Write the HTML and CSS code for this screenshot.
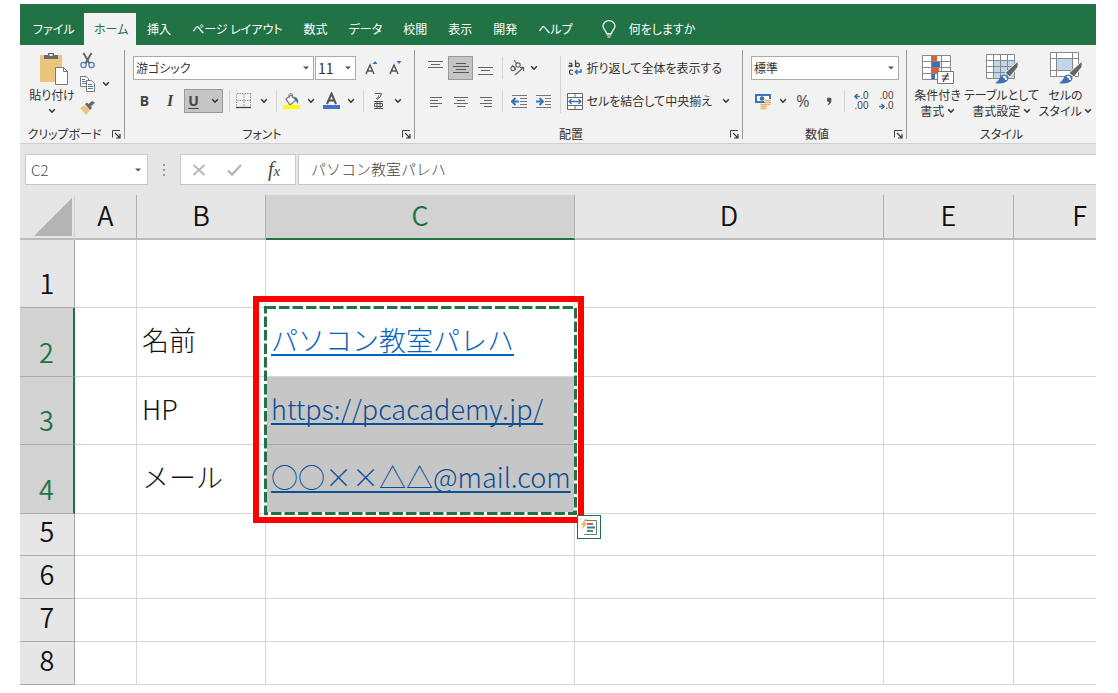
FILE: index.html
```html
<!DOCTYPE html>
<html lang="ja">
<head>
<meta charset="utf-8">
<meta name="viewport" content="width=device-width, initial-scale=1">
<title>ブック - 表計算</title>
<link rel="stylesheet" href="styles.css">
</head>
<body>
<svg class="defs" width="0" height="0" aria-hidden="true">
  <symbol id="chev" viewBox="0 0 8 6"><path d="M1.2 1.2 4 4.2 6.8 1.2" fill="none" stroke="#333" stroke-width="1.5"/></symbol>
  <symbol id="launch" viewBox="0 0 9 9"><path d="M.5 7.5V.5H8" fill="none" stroke="#444"/><path d="M3 3l4.500 4.500M8 4v4H4" fill="none" stroke="#333" stroke-width="1.2"/></symbol>
  <symbol id="tri" viewBox="0 0 6 4"><path d="M0 .5h6L3 3.500z" fill="#555"/></symbol>
</svg>
<div class="app">
  <nav class="tabs" aria-label="リボン タブ">
    <button class="tab">ファイル</button>
    <button class="tab tab-active">ホーム</button>
    <button class="tab">挿入</button>
    <button class="tab">ページ レイアウト</button>
    <button class="tab">数式</button>
    <button class="tab">データ</button>
    <button class="tab">校閲</button>
    <button class="tab">表示</button>
    <button class="tab">開発</button>
    <button class="tab">ヘルプ</button>
    <button class="tab tell-me">
      <svg width="14" height="18" viewBox="0 0 14 18" fill="none" stroke="#fff" stroke-width="1.200"><path d="M4.500 13.500c0-3-3.500-4-3.500-7.500a6 5.400 0 0 1 12 0c0 3.500-3.500 4.500-3.500 7.500zM4.500 15h5M5.500 17h3"/></svg>
      何をしますか
    </button>
  </nav>

  <div class="ribbon">
    <section class="group group-clipboard">
      <div class="body">
        <button class="paste">
          <svg width="30" height="34" viewBox="0 0 30 34"><rect x="1" y="3" width="22" height="27" fill="#ebc57e"/><path d="M5 7V3h4V1h6v2h4v4z" fill="#6a6a6a"/><rect x="10.500" y="2" width="3" height="2" fill="#f2f2f2"/><path d="M16.500 15.500h8l4 4v13h-12z" fill="#fff" stroke="#777"/><path d="M24.500 15.500v4h4" fill="none" stroke="#777"/></svg>
          <span>貼り付け</span>
          <svg width="8" height="6"><use href="#chev"/></svg>
        </button>
        <div class="clip-tools">
          <button class="tool" aria-label="切り取り"><svg width="15" height="17" viewBox="0 0 15 17" fill="none"><path d="M3.500 1 9.500 11.500M11.500 1 5.500 11.500" stroke="#666" stroke-width="2"/><circle cx="3.500" cy="13" r="2.600" stroke="#4a7ebb" stroke-width="1.300"/><circle cx="11.500" cy="13" r="2.600" stroke="#4a7ebb" stroke-width="1.300"/></svg></button>
          <button class="tool split" aria-label="コピー"><svg width="15" height="16" viewBox="0 0 15 16"><path d="M.5.5h6l2 2v8h-8z" fill="#fff" stroke="#777"/><path d="M2 3.500h3M2 5.500h4M2 7.500h4" stroke="#4a7ebb"/><path d="M6.500 4.500h5l3 3v8h-8z" fill="#fff" stroke="#777"/><path d="M8 8.500h4M8 10.500h5M8 12.500h5" stroke="#4a7ebb"/></svg><svg width="8" height="6"><use href="#chev"/></svg></button>
          <button class="tool" aria-label="書式のコピー"><svg width="15" height="14" viewBox="0 0 15 14"><path d="M0 7l5-3 5 5-4 5z" fill="#ebc57e"/><path d="M5 3l2-1.500 1.500 1.500L12 0l3 1.500-4 4L12 7l-2 2z" fill="#666"/></svg></button>
        </div>
      </div>
      <footer><span>クリップボード</span><button class="launch" aria-label="クリップボードの詳細"><svg width="9" height="9"><use href="#launch"/></svg></button></footer>
    </section>

    <section class="group group-font">
      <div class="body rows">
        <div class="row">
          <div class="combo combo-font"><select aria-label="フォント"><option>游ゴシック</option></select><svg width="6" height="4"><use href="#tri"/></svg></div>
          <div class="combo combo-size"><select aria-label="フォント サイズ"><option>11</option></select><svg width="6" height="4"><use href="#tri"/></svg></div>
          <button class="tool size-step" aria-label="フォント サイズの拡大"><svg width="14" height="15" viewBox="0 0 14 15"><path d="M1 13 5 4l4 9M2.500 10h5" fill="none" stroke="#555" stroke-width="1.500"/><path d="M7.500 3h5L10 0z" fill="#3b72b8"/></svg></button>
          <button class="tool size-step" aria-label="フォント サイズの縮小"><svg width="14" height="15" viewBox="0 0 14 15"><path d="M1 13 5 4l4 9M2.500 10h5" fill="none" stroke="#555" stroke-width="1.500"/><path d="M7.500 0h5L10 3z" fill="#3b72b8"/></svg></button>
        </div>
        <div class="row">
          <button class="tool letter bold">B</button>
          <button class="tool letter italic">I</button>
          <button class="tool letter underline"><span>U</span><svg width="8" height="6"><use href="#chev"/></svg></button>
          <i class="sep"></i>
          <button class="tool split" aria-label="罫線"><svg width="17" height="16" viewBox="0 0 17 16"><path d="M1 .5h14M1 7.500h14M.5 1v13M8 1v13M14.500 1v13" fill="none" stroke="#999" stroke-dasharray="1.500 1"/><path d="M0 14.500h15" stroke="#444" stroke-width="1.300"/></svg><svg width="8" height="6"><use href="#chev"/></svg></button>
          <i class="sep"></i>
          <button class="tool split" aria-label="塗りつぶしの色"><svg width="17" height="18" viewBox="0 0 17 18"><path d="M3 7l5-4 5 5-6 5z" fill="#fff" stroke="#777" stroke-width="1.200"/><path d="M6 6V2.500a2 2 0 0 1 3.500 0V6" fill="none" stroke="#777"/><path d="M11 5c3 0 5 2 4 7-1-2-2-3-3-4z" fill="#3b72b8"/><rect y="13" width="17" height="4" fill="#ffff00"/></svg><svg width="8" height="6"><use href="#chev"/></svg></button>
          <button class="tool split fontcolor" aria-label="フォントの色"><svg width="17" height="18" viewBox="0 0 17 18"><path d="M4 12 8.500 1.500 13 12M5.500 8.500h6" fill="none" stroke="#555" stroke-width="2"/><rect y="13" width="17" height="4" fill="#4472c4"/></svg><svg width="8" height="6"><use href="#chev"/></svg></button>
          <i class="sep"></i>
          <button class="tool split" aria-label="ふりがな"><svg width="17" height="18" viewBox="0 0 17 18" fill="none" stroke="#555"><path d="M5 1.500h6.500C11 4 9.500 6 7 7.500M8.500 3.500C8.500 5 8 6 6 7M4 9.500h9M4 16.500h9M7 9.500v7M10 9.500v7M4.500 11.500h8v3h-8z"/></svg><svg width="8" height="6"><use href="#chev"/></svg></button>
        </div>
      </div>
      <footer><span>フォント</span><button class="launch" aria-label="フォントの詳細"><svg width="9" height="9"><use href="#launch"/></svg></button></footer>
    </section>

    <section class="group group-align">
      <div class="body">
        <div class="rows">
          <div class="row">
            <button class="tool sq" aria-label="上揃え"><svg width="16" height="16" viewBox="0 0 16 16"><path d="M0 1.500h15M3 4.500h9M0 7.500h15" stroke="#666"/></svg></button>
            <button class="tool sq pressed" aria-label="上下中央揃え"><svg width="16" height="16" viewBox="0 0 16 16"><path d="M3 3.500h10M0 6.500h16M3 9.500h10M0 12.500h16" stroke="#555"/></svg></button>
            <button class="tool sq" aria-label="下揃え"><svg width="16" height="16" viewBox="0 0 16 16"><path d="M0 7.500h15M3 10.500h9M0 14.500h15" stroke="#666"/></svg></button>
            <i class="sep"></i>
            <button class="tool split" aria-label="方向"><svg width="17" height="17" viewBox="0 0 17 17"><g fill="none" stroke="#666" stroke-width="1.200"><circle cx="4" cy="8.500" r="2.200"/><path d="M3 5l4 5"/><circle cx="9" cy="5" r="2.200"/><path d="M5 0l3 4"/></g><path d="M6 15 14.500 7.500M11 7.500h3.500V11" fill="none" stroke="#666" stroke-width="1.300"/></svg><svg width="8" height="6"><use href="#chev"/></svg></button>
          </div>
          <div class="row">
            <button class="tool sq" aria-label="左揃え"><svg width="14" height="11" viewBox="0 0 14 11"><path d="M1 1.500h12M1 4.500h8M1 7.500h12M1 10.500h8" stroke="#666"/></svg></button>
            <button class="tool sq" aria-label="中央揃え"><svg width="14" height="11" viewBox="0 0 14 11"><path d="M0 1.500h14M3 4.500h8M0 7.500h14M3 10.500h8" stroke="#666"/></svg></button>
            <button class="tool sq" aria-label="右揃え"><svg width="14" height="11" viewBox="0 0 14 11"><path d="M1 1.500h12M5 4.500h8M1 7.500h12M5 10.500h8" stroke="#666"/></svg></button>
            <i class="sep"></i>
            <button class="tool sq" aria-label="インデントを減らす"><svg width="16" height="15" viewBox="0 0 16 15"><path d="M1 1.500h15M9 4.500h7M9 7.500h7M9 10.500h7M1 13.500h15" stroke="#777"/><path d="M8 7.500H1.500M4.500 4 1 7.500 4.500 11" fill="none" stroke="#3b72b8" stroke-width="2"/></svg></button>
            <button class="tool sq" aria-label="インデントを増やす"><svg width="16" height="15" viewBox="0 0 16 15"><path d="M0 1.500h15M9 4.500h6M9 7.500h6M9 10.500h6M0 13.500h15" stroke="#777"/><path d="M0 7.500h6.500M3.500 4 7 7.500 3.500 11" fill="none" stroke="#3b72b8" stroke-width="2"/></svg></button>
          </div>
        </div>
        <i class="sep sep-tall"></i>
        <div class="rows">
          <button class="tool wide"><svg width="16" height="16" viewBox="0 0 16 16"><g fill="none" stroke="#444" stroke-width="1.200"><path d="M2 3.500q3-1 3 1V7M5 5q-3 0-3 1.200T5 6"/><path d="M8.500 0v7"/><circle cx="10.500" cy="5" r="1.900"/><path d="M6 10.500q-3.500-1.500-3.500 1.500T6 14"/></g><path d="M14 9v3H8.500M10.500 9.800 8.300 12l2.200 2.200" fill="none" stroke="#3b72b8" stroke-width="1.500"/></svg>折り返して全体を表示する</button>
          <button class="tool wide"><svg width="16" height="17" viewBox="0 0 16 17"><path d="M.5.500h15v16H.500zM.5 4.500h15M.5 12.500h15M8 .5v4M8 12.500v4" fill="#fff" stroke="#666"/><path d="M2 8.500h12M4.500 6 2 8.500 4.500 11M11.500 6 14 8.500 11.500 11" fill="none" stroke="#3b72b8" stroke-width="1.300"/></svg>セルを結合して中央揃え<svg class="end" width="8" height="6"><use href="#chev"/></svg></button>
        </div>
      </div>
      <footer><span>配置</span><button class="launch" aria-label="配置の詳細"><svg width="9" height="9"><use href="#launch"/></svg></button></footer>
    </section>

    <section class="group group-number">
      <div class="body rows">
        <div class="combo"><select aria-label="数値の書式"><option>標準</option></select><svg width="6" height="4"><use href="#tri"/></svg></div>
        <div class="row">
          <button class="tool split money" aria-label="通貨表示形式"><svg width="17" height="17" viewBox="0 0 17 17"><path d="M0 1h16v9H0z" fill="#3b72b8"/><path d="M2 3h12v5H2z" fill="#fff"/><circle cx="7" cy="5.500" r="2.300" fill="#3b72b8"/><path d="M9 6h7v3H9zM5 10h7v6H5z" fill="#f2f2f2"/><path d="M9.500 7.500h6M9.500 9.500h6M9.500 11.500h6M5.500 11.500h6M5.500 13.500h6M5.500 15.500h6" stroke="#e6b566" stroke-width="1.300"/></svg><svg width="8" height="6"><use href="#chev"/></svg></button>
          <button class="tool sq percent">%</button>
          <button class="tool sq comma" aria-label="桁区切り"><svg width="6" height="9" viewBox="0 0 6 9"><path d="M3 .5a2.200 2.200 0 0 1 2.500 2.500C5.500 6 3.500 8 1 8.500 2.500 7 3 6 3 5A2.200 2.200 0 0 1 3 .5z" fill="#555"/></svg></button>
          <i class="sep"></i>
          <button class="tool sq decimal"><span><svg width="6" height="7" viewBox="0 0 6 7"><path d="M6 3.500H1.500M3.500 1 1 3.500 3.500 6" fill="none" stroke="#3b72b8" stroke-width="1.600"/></svg>.0</span><span>.00</span></button>
          <button class="tool sq decimal"><span>.00</span><span><svg width="6" height="7" viewBox="0 0 6 7"><path d="M0 3.500h4.500M2.500 1 5 3.500 2.500 6" fill="none" stroke="#3b72b8" stroke-width="1.600"/></svg>.0</span></button>
        </div>
      </div>
      <footer><span>数値</span><button class="launch" aria-label="数値の詳細"><svg width="9" height="9"><use href="#launch"/></svg></button></footer>
    </section>

    <section class="group group-styles">
      <div class="body">
        <button class="big">
          <svg width="32" height="32" viewBox="0 0 32 32"><path d="M.5 3.500h28v24H.5z" fill="#fff"/><path d="M9 4h6v5H9z" fill="#d9603c"/><path d="M9 10h9v5H9z" fill="#3b72b8"/><path d="M9 16h8v5H9z" fill="#d9603c"/><path d="M9 22h4v5H9z" fill="#3b72b8"/><path d="M.5 3.500h28v24H.5zM.5 9.500h28M.5 15.500h28M.5 21.500h28M9.500 3.500v24M19.500 3.500v24" fill="none" stroke="#888"/><path d="M15.500 19.500h16v12h-16z" fill="#fff" stroke="#777"/><path d="M20 24h7M20 27h7M26 21l-5 9" stroke="#333" stroke-width="1.200"/></svg>
          <span>条件付き</span><span>書式 <svg width="8" height="6"><use href="#chev"/></svg></span>
        </button>
        <button class="big">
          <svg width="32" height="32" viewBox="0 0 32 32"><path d="M.5 2.500h28v24H.5z" fill="#fff"/><path d="M7 8h21v18H7z" fill="#c2d6ea"/><path d="M.5 2.500h28v24H.5zM.5 8.500h28M.5 14.500h28M.5 20.500h28M7.500 2.500v24M14.500 2.500v24M21.500 2.500v24" fill="none" stroke="#888"/><path d="M32 9v6l-8 10-5-4z" fill="#666" stroke="#f2f2f2"/><path d="M9 31c4-2 4-5 7-8 4-2 8 2 6 5-3 4-9 4-13 3z" fill="#3b72b8"/><path d="M17 25q3-1 3 3" fill="none" stroke="#fff" stroke-width="2"/></svg>
          <span>テーブルとして</span><span>書式設定 <svg width="8" height="6"><use href="#chev"/></svg></span>
        </button>
        <button class="big">
          <svg width="32" height="32" viewBox="0 0 32 32"><path d="M.5.500h28v24H.500z" fill="#fff"/><path d="M7 7h15v11H7z" fill="#c2d6ea"/><path d="M.5.500h28v24H.500zM.5 6.500h28M.5 18.500h28M6.500.500v24M22.500.500v24" fill="none" stroke="#888"/><path d="M32 9v6l-8 10-5-4z" fill="#666" stroke="#f2f2f2"/><path d="M9 31c4-2 4-5 7-8 4-2 8 2 6 5-3 4-9 4-13 3z" fill="#3b72b8"/><path d="M17 25q3-1 3 3" fill="none" stroke="#fff" stroke-width="2"/></svg>
          <span>セルの</span><span>スタイル <svg width="8" height="6"><use href="#chev"/></svg></span>
        </button>
      </div>
      <footer><span>スタイル</span></footer>
    </section>
  </div>

  <div class="formula-bar">
    <div class="name-box"><input type="text" value="C2" aria-label="名前ボックス"><svg width="6" height="4"><use href="#tri"/></svg></div>
    <svg class="grip" width="4" height="14" viewBox="0 0 4 14"><path d="M1 1h2v2H1zM1 6h2v2H1zM1 11h2v2H1z" fill="#999"/></svg>
    <div class="fx-box">
      <button class="tool" aria-label="キャンセル"><svg width="14" height="12" viewBox="0 0 14 12"><path d="M1.500 1 12.500 11M12.500 1 1.500 11" stroke="#b5b5b5" stroke-width="1.800"/></svg></button>
      <button class="tool" aria-label="入力"><svg width="15" height="12" viewBox="0 0 15 12"><path d="M1 6.500 5 10.500 14 1" fill="none" stroke="#b5b5b5" stroke-width="2.400"/></svg></button>
      <button class="tool fx" aria-label="関数の挿入">f<small>x</small></button>
    </div>
    <input class="formula" type="text" value="パソコン教室パレハ" aria-label="数式バー">
  </div>

  <div class="grid">
    <table>
      <colgroup><col class="c-head"><col class="c-a"><col class="c-b"><col class="c-c"><col class="c-d"><col class="c-e"><col class="c-f"></colgroup>
      <thead>
        <tr class="r-head"><td class="corner"><svg width="38" height="38" viewBox="0 0 38 38"><path d="M38 0v38H0z" fill="#b4b4b4"/></svg></td><th scope="col">A</th><th scope="col">B</th><th scope="col" class="on">C</th><th scope="col">D</th><th scope="col">E</th><th scope="col">F</th></tr>
      </thead>
      <tbody>
        <tr class="r-68"><th scope="row">1</th><td></td><td></td><td></td><td></td><td></td><td></td></tr>
        <tr class="r-69"><th scope="row" class="on">2</th><td></td><td>名前</td><td><a href="#">パソコン教室パレハ</a></td><td></td><td></td><td></td></tr>
        <tr class="r-68"><th scope="row" class="on">3</th><td></td><td>HP</td><td class="picked"><a href="#">https://pcacademy.jp/</a></td><td></td><td></td><td></td></tr>
        <tr class="r-69"><th scope="row" class="on">4</th><td></td><td>メール</td><td class="picked"><a href="#">○○××△△@mail.com</a></td><td></td><td></td><td></td></tr>
        <tr class="r-42"><th scope="row">5</th><td></td><td></td><td></td><td></td><td></td><td></td></tr>
        <tr class="r-43"><th scope="row">6</th><td></td><td></td><td></td><td></td><td></td><td></td></tr>
        <tr class="r-43"><th scope="row">7</th><td></td><td></td><td></td><td></td><td></td><td></td></tr>
        <tr class="r-43"><th scope="row">8</th><td></td><td></td><td></td><td></td><td></td><td></td></tr>
      </tbody>
    </table>
    <svg class="ants" width="313" height="209" viewBox="0 0 313 209" fill="none" stroke-width="3"><path d="M1.500 1.500h310v206h-310z" stroke="#fff"/><path d="M1.500 1.500h310v206h-310z" stroke="#217346" stroke-dasharray="10.500 3"/><path d="M309 205h4v4h-4z" fill="#217346"/></svg>
    <div class="frame"></div>
    <button class="quick" aria-label="クイック分析"><svg width="18" height="18" viewBox="0 0 18 18"><path d="M4 2.500h12.500v14H4" fill="#fff" stroke="#777"/><path d="M7 5h6v2H7z" fill="#d9603c"/><path d="M7 8.500h8v2H7z" fill="#3b72b8"/><path d="M7 12h6v2H7z" fill="#3f8f83"/><path d="M5 1 1 7h2l-1 5 5-7H4.500L7 1z" fill="#f5b35c"/></svg></button>
  </div>
</div>
</body>
</html>
```
FILE: styles.css
```css
* { box-sizing: border-box; }

body {
  margin: 0;
  background: #fff;
  color: #333;
  font: 12px/16px "Noto Sans CJK JP", sans-serif;
}

.app {
  margin: 4px 22px 8px 20px;
  overflow: hidden;
}

.defs { position: absolute; }

button, select, input {
  margin: 0;
  padding: 0;
  border: 0;
  border-radius: 0;
  background: none;
  color: inherit;
  font: inherit;
}

svg { flex: none; display: block; }

/* tabs */
.tabs {
  display: flex;
  align-items: flex-end;
  gap: 1px;
  height: 41px;
  padding-left: 3px;
  background: #217346;
}

.tab {
  height: 32px;
  padding: 0 10px;
  color: #fff;
  font-feature-settings: "palt";
  white-space: nowrap;
}

.tab:first-child { width: 60px; }
.tab-active { width: 52px; background: #f2f2f2; color: #217346; }

.tell-me {
  display: flex;
  align-items: center;
  gap: 13px;
  padding-left: 18px;
}

/* ribbon */
.ribbon {
  display: flex;
  height: 99px;
  background: #f2f2f2;
  border-bottom: 1px solid #d0d0d0;
  font-feature-settings: "palt";
}

.group {
  display: flex;
  flex: none;
  flex-direction: column;
  justify-content: space-between;
  background: linear-gradient(#999, #999) right 5px / 1px 89px no-repeat;
}

.group-clipboard { width: 105px; }
.group-font { width: 290px; }
.group-align { width: 328px; }
.group-number { width: 164px; }
.group-styles { flex: 1 0 189px; background: none; }

.body { display: flex; padding: 11px 8px 0; }
.rows { display: flex; flex-direction: column; gap: 9px; }
.row { display: flex; align-items: center; height: 24px; }

.group footer { display: flex; align-items: center; height: 18px; }
.group footer span { flex: 1; text-align: center; }
.launch { width: 16px; padding-left: 3px; }

.tool {
  display: flex;
  flex: none;
  align-items: center;
  justify-content: center;
  height: 24px;
}

.split { gap: 7px; padding-right: 2px; }
.sq { width: 25px; }
.sep { flex: none; width: 1px; height: 22px; margin: 0 6px; background: #d4d4d4; }
.sep-tall { height: 57px; }

.pressed, .underline { background: #c5c5c5; border: 1px solid #999; }

.group-clipboard .body { padding: 3px 0 0 10px; gap: 6px; }
.paste { display: flex; flex-direction: column; align-items: center; gap: 1px; width: 44px; padding-top: 4px; }
.paste svg:first-child { margin-left: 4px; }
.paste svg:last-child { margin-top: 4px; }
.paste span { white-space: nowrap; }
.clip-tools { display: flex; flex-direction: column; align-items: flex-start; }

.combo { position: relative; flex: none; height: 24px; background: #fff; border: 1px solid #ababab; }
.combo select { appearance: none; width: 100%; height: 22px; padding-left: 2px; font-size: 12px; }
.combo > svg { position: absolute; right: 4px; top: 9px; pointer-events: none; }
.combo-font { width: 181px; margin-right: 1px; }
.combo-size { width: 41px; margin-right: 9px; }
.combo-size select { font-size: 14px; }
.size-step { width: 14px; margin-right: 10px; }

.letter { color: #444; font-family: "Noto Sans", sans-serif; font-size: 14px; font-weight: 700; }
.bold { width: 23px; }
.italic { width: 28px; font-family: "Liberation Serif", serif; font-size: 16px; font-style: italic; }
.underline { gap: 12px; width: 39px; }
.underline span { text-decoration: underline; text-underline-offset: 2px; }
.fontcolor { margin-left: 6px; }

.group-align .sep { margin: 0 3px 0 4px; }
.group-align .split { gap: 4px; margin-left: 3px; }
.wide { justify-content: flex-start; gap: 4px; white-space: nowrap; }
.wide .end { margin-left: 6px; }
.group-align .sep-tall { margin: 0 6px 0 auto; }
.group-align .body { padding-right: 13px; }

.percent { width: 26px; color: #555; font: 16px "Noto Sans", sans-serif; }
.money { margin: 0 1px 0 4px; }
.group-number .sep { margin: 0 4px 0 3px; }
.decimal { flex-direction: column; color: #444; font: 10px/10px "Liberation Sans", sans-serif; }
.decimal span { display: flex; align-items: center; }

.group-styles .body { justify-content: center; padding: 7px 3px 0; }
.big { display: flex; flex-direction: column; align-items: center; white-space: nowrap; width: 54px; }
.big:nth-child(2) { width: 74px; }
.big > svg { margin-bottom: 3px; }
.big span svg { display: inline-block; vertical-align: 2px; }

/* formula bar */
.formula-bar {
  display: flex;
  align-items: center;
  height: 51px;
  padding: 0 0 0 5px;
  background: #e6e6e6;
  color: #444;
  font-weight: 300;
}

.name-box, .fx-box, .formula { height: 31px; background: #fff; border: 1px solid #c8c8c8; }
.name-box { display: flex; align-items: center; width: 123px; padding: 0 6px 0 5px; }
.name-box input { flex: 1; min-width: 0; font-size: 15px; }
.grip { margin: 0 14px; }
.fx-box { display: flex; justify-content: space-around; align-items: center; width: 116px; margin-right: 2px; }
.fx { width: 20px; color: #444; font: italic 20px "Liberation Serif", serif; }
.fx small { font-size: 15px; padding-top: 4px; }
.formula { flex: 1; min-width: 0; padding: 0 0 3px 12px; border-right: 0; font-size: 15px; }

/* sheet */
.grid { position: relative; color: #111; font-size: 27px; font-weight: 300; line-height: 28px; }

table {
  width: max(100%, 1126px);
  border-spacing: 0;
  table-layout: fixed;
}

.c-head { width: 55px; }
.c-a { width: 62px; }
.c-b { width: 129px; }
.c-c, .c-d { width: 309px; }
.c-e { width: 130px; }

.r-head { height: 45px; }
.r-42 { height: 42px; }
.r-43 { height: 43px; }
.r-68 { height: 68px; }
.r-69 { height: 69px; }

th, td {
  padding: 0 5px 4px;
  border-right: 1px solid #d6d6d6;
  border-bottom: 1px solid #d6d6d6;
  white-space: nowrap;
}

th { background: #e6e6e6; font-weight: 350; }

thead th { border-right-color: #b0b0b0; border-bottom: 2px solid #bbb; }
thead .on { background: #d2d2d2; border-bottom-color: #217346; color: #217346; }

tbody th { padding-bottom: 10px; border-color: #aaa; vertical-align: bottom; }
tbody .on { background: #d2d2d2; border-right: 2px solid #217346; color: #217346; }

.corner { padding: 0 2px 2px; background: #e6e6e6; border-bottom: 2px solid #bbb; vertical-align: bottom; }
.corner svg { margin-left: auto; }

.picked { background: #c6c6c6; border-bottom-color: #aaa; }

td a {
  color: #0563c1;
  text-decoration: underline;
  text-decoration-thickness: 2px;
  text-underline-offset: 3px;
  text-decoration-skip-ink: none;
}
.picked a { color: #0b4f95; }

.ants { position: absolute; left: 244px; top: 111px; pointer-events: none; }
.frame { position: absolute; left: 233px; top: 101px; width: 331px; height: 227px; border: 6px solid #f00; pointer-events: none; }
.quick {
  position: absolute;
  left: 557px;
  top: 320px;
  display: grid;
  place-items: center;
  width: 24px;
  height: 24px;
  background: #fff;
  border: 1px solid #217346;
}
```
